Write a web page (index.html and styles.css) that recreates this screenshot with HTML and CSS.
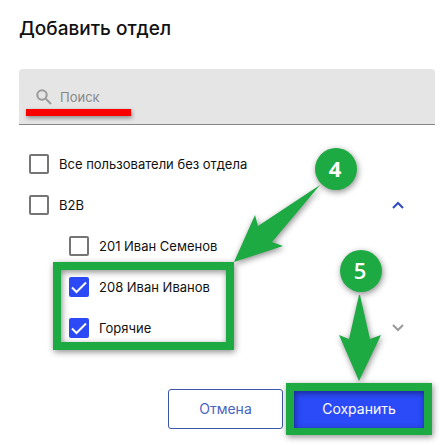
FILE: index.html
```
<!DOCTYPE html>
<html lang="ru">
<head>
    <meta charset="UTF-8">
    <meta name="viewport" content="width=device-width, initial-scale=1.0">
    <title>Добавить отдел</title>
    <link rel="stylesheet" href="styles.css">
</head>
<body>
    <main class="dialog">
        <h1 class="title">Добавить отдел</h1>

        <label class="search">
            <svg class="search-icon" viewBox="0 0 16 16" aria-hidden="true">
                <circle cx="6" cy="6" r="4.7"/>
                <path d="M9.6 9.6L15 15"/>
            </svg>
            <input class="search-input" type="search" placeholder="Поиск" aria-label="Поиск">
        </label>

        <ul class="list">
            <li class="row">
                <label class="option"><input class="check" type="checkbox">Все пользователи без отдела</label>
            </li>
            <li class="row">
                <label class="option"><input class="check" type="checkbox">B2B</label>
                <button class="toggle open" type="button" aria-label="Свернуть">
                    <svg viewBox="0 0 12 8" aria-hidden="true"><path d="M1 7l5-5 5 5"/></svg>
                </button>
            </li>
            <li class="row nested">
                <label class="option"><input class="check" type="checkbox">201 Иван Семенов</label>
            </li>
            <li class="row nested">
                <label class="option"><input class="check" type="checkbox" checked>208 Иван Иванов</label>
            </li>
            <li class="row nested">
                <label class="option"><input class="check" type="checkbox" checked>Горячие</label>
                <button class="toggle" type="button" aria-label="Развернуть">
                    <svg viewBox="0 0 12 8" aria-hidden="true"><path d="M1 1l5 5 5-5"/></svg>
                </button>
            </li>
        </ul>

        <div class="actions">
            <button class="btn cancel" type="button">Отмена</button>
            <button class="btn save" type="button">Сохранить</button>
        </div>

        <!-- guide marks over the dialog -->
        <svg class="marks" width="448" height="445" viewBox="0 0 448 445">
            <path class="underline" d="M26 109h105v7H26z"/>
            <g class="green">
                <path d="M53 262h181v88H53zM61 270v72h165v-72z"/>
                <path d="M286 383h146v52H286zM294 391v37h130v-37z"/>
                <path d="M320 185L258 226L255 215L234 262L283 246L272 242z"/>
                <path d="M359 295L349 339L339 335L359 381L381 335L370 339L360 295z"/>
                <circle cx="336" cy="169" r="21"/>
                <circle cx="361" cy="271" r="21"/>
            </g>
            <text class="num bold" x="335" y="177">4</text>
            <text class="num" x="360" y="279">5</text>
        </svg>
    </main>
</body>
</html>
```
FILE: styles.css
```
*{
    margin: 0;
    padding: 0;
    box-sizing: border-box;
}
body{
    background-color: white;
    color: #111;
    font-family: "Inter", "Open Sans", sans-serif;
    font-size: 13px;
    line-height: 20px;
}
button, input{
    font: inherit;
}
.dialog{
    position: relative;
    padding: 17px 13px 16px 19px;
}
.title{
    font-size: 19px;
    font-weight: 500;
    line-height: 24px;
    margin-bottom: 28px;
}
.search{
    display: flex;
    align-items: center;
    gap: 8px;
    height: 56px;
    padding: 0 17px;
    background-color: #e5e5e5;
    border-bottom: 1px solid #858585;
    border-radius: 4px 4px 0 0;
}
.search-icon{
    width: 16px;
    height: 16px;
    fill: none;
    stroke: #999;
    stroke-width: 2;
}
.search-input{
    flex: 1;
    min-width: 0;
    border: none;
    outline: none;
    background: none;
}
.search-input::placeholder{
    color: #888;
}
.list{
    display: grid;
    gap: 1px;
    margin-top: 19px;
    list-style: none;
}
.row{
    display: flex;
    align-items: center;
    justify-content: space-between;
    height: 40px;
    padding: 0 31px 0 10px;
}
.nested{
    padding-left: 50px;
}
.option{
    display: flex;
    align-items: center;
    gap: 10px;
}
.check{
    appearance: none;
    width: 20px;
    height: 20px;
    border: 2px solid #757575;
    border-radius: 2px;
}
.check:checked{
    border-color: #2b4af5;
    background: #2b4af5 url("data:image/svg+xml,%3Csvg xmlns='http://www.w3.org/2000/svg' viewBox='0 0 16 16'%3E%3Cpath d='M1 8.5l4.5 4.5L15 3.5' fill='none' stroke='white' stroke-width='2'/%3E%3C/svg%3E") center no-repeat;
}
.toggle{
    display: flex;
    border: none;
    background: none;
    cursor: pointer;
}
.toggle svg{
    width: 12px;
    height: 8px;
    fill: none;
    stroke: #999;
    stroke-width: 2;
}
.toggle.open svg{
    stroke: #2f4bc4;
}
.actions{
    display: flex;
    justify-content: flex-end;
    gap: 8px;
    margin-top: 41px;
    padding-right: 8px;
}
.btn{
    height: 40px;
    border-radius: 3px;
    font-size: 14px;
    cursor: pointer;
}
.cancel{
    width: 115px;
    border: 1px solid #3c56a8;
    background-color: white;
    color: #4a63bd;
}
.save{
    width: 136px;
    border: none;
    background-color: #2b4af8;
    color: white;
}
.marks{
    position: absolute;
    top: 0;
    left: 0;
    pointer-events: none;
}
.underline{
    fill: #f80000;
    filter: drop-shadow(1px 2px 2px rgba(0, 0, 0, 0.4));
}
.green{
    fill: #1daa43;
    fill-rule: evenodd;
    filter: drop-shadow(1px 2px 3px rgba(0, 0, 0, 0.45));
}
.num{
    fill: white;
    font-family: "Open Sans", sans-serif;
    font-size: 22px;
    font-weight: 600;
    text-anchor: middle;
}
.bold{
    font-weight: 700;
}
```
